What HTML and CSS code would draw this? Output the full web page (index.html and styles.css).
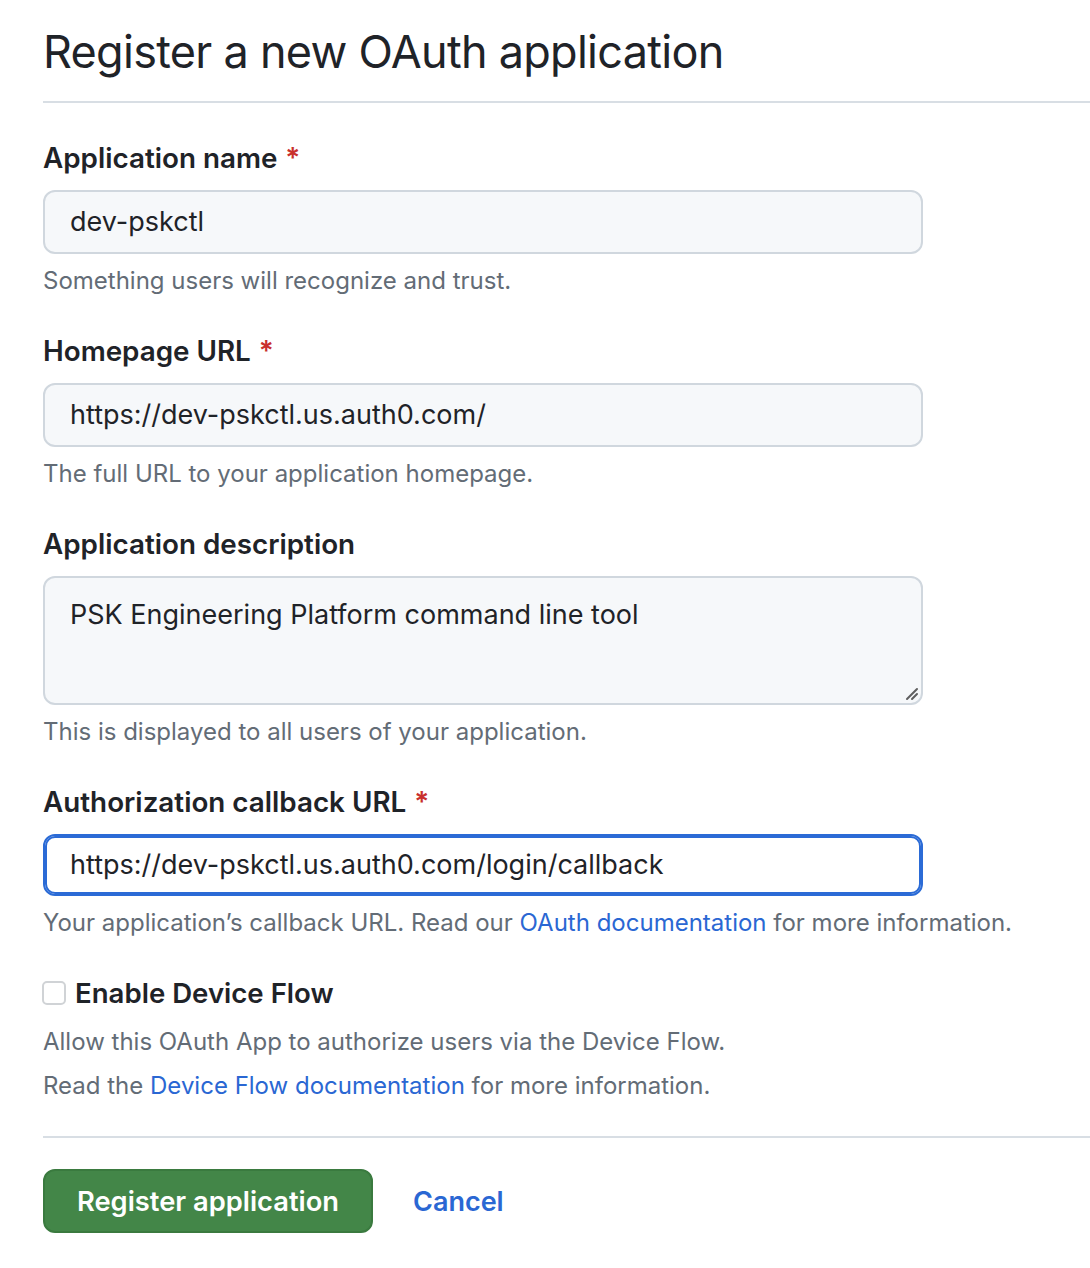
FILE: index.html
```html
<!DOCTYPE html>
<html lang="en">
<head>
<meta charset="utf-8">
<title>Register a new OAuth application</title>
<link rel="stylesheet" href="styles.css">
</head>
<body>
<div class="page">
  <h1 class="title">Register a new OAuth application</h1>
  <form class="form">
    <div class="group">
      <label class="label">Application name <span class="req">*</span></label>
      <div class="control">dev-pskctl</div>
      <p class="note">Something users will recognize and trust.</p>
    </div>
    <div class="group">
      <label class="label">Homepage URL <span class="req">*</span></label>
      <div class="control">https://dev-pskctl.us.auth0.com/</div>
      <p class="note">The full URL to your application homepage.</p>
    </div>
    <div class="group">
      <label class="label">Application description</label>
      <div class="control textarea">PSK Engineering Platform command line tool
        <svg class="grip" width="16" height="16" viewBox="0 0 16 16"><path d="M14 4 L4 14 M14 9 L9 14" stroke="#5f5f5f" stroke-width="2" stroke-linecap="round" fill="none"/></svg>
      </div>
      <p class="note">This is displayed to all users of your application.</p>
    </div>
    <div class="group">
      <label class="label">Authorization callback URL <span class="req">*</span></label>
      <div class="control focused">https://dev-pskctl.us.auth0.com/login/callback</div>
      <p class="note">Your application’s callback URL. Read our <a class="link">OAuth documentation</a> for more information.</p>
    </div>
    <div class="group check-group">
      <div class="check-row">
        <span class="checkbox"></span>
        <span class="check-label">Enable Device Flow</span>
      </div>
      <p class="note note-lg">Allow this OAuth App to authorize users via the Device Flow.</p>
      <p class="note note-lg">Read the <a class="link">Device Flow documentation</a> for more information.</p>
    </div>
    <div class="actions">
      <button type="button" class="btn-primary">Register application</button>
      <a class="cancel">Cancel</a>
    </div>
  </form>
</div>
</body>
</html>
```
FILE: styles.css
```css
html, body {
  margin: 0;
  padding: 0;
  background: #ffffff;
}
body {
  font-family: Inter, "Liberation Sans", sans-serif;
  color: #1f2328;
  overflow: hidden;
}
.page {
  padding-left: 43px;
}
.title {
  margin: 0;
  padding: 22px 0 19px;
  font-size: 45px;
  line-height: 60px;
  font-weight: 400;
  letter-spacing: -0.72px;
  border-bottom: 2px solid #d8dee4;
}
.form {
  padding-top: 35px;
}
.group {
  margin-bottom: 32px;
}
.label {
  display: block;
  font-size: 27.8px;
  line-height: 40px;
  font-weight: 600;
  margin-bottom: 12px;
}
.req {
  color: #c9302c;
  margin-left: 1px;
}
.control {
  position: relative;
  box-sizing: border-box;
  width: 880px;
  height: 64px;
  padding: 0 25px;
  border: 2px solid #d0d7de;
  border-radius: 12px;
  background: #f6f8fa;
  font-size: 27px;
  line-height: 60px;
  color: #1f2328;
}
.textarea {
  height: 129px;
  padding-top: 15px;
  line-height: 44px;
}
.grip {
  position: absolute;
  right: 2px;
  bottom: 2px;
}
.focused {
  background: #ffffff;
  border-color: #2b6bd6;
  box-shadow: inset 0 0 0 2px #2b6bd6;
  height: 62px;
  line-height: 58px;
}
.note {
  margin: 9px 0 0;
  font-size: 24px;
  line-height: 36px;
  color: #636c76;
}
.link {
  color: #2a67d3;
  text-decoration: none;
}
.check-row {
  display: flex;
  align-items: center;
  height: 40px;
}
.checkbox {
  box-sizing: border-box;
  width: 24px;
  height: 24px;
  border: 2px solid #d0d3d6;
  border-radius: 5px;
  background: #fff;
  margin-left: -1px;
  margin-right: 9px;
}
.check-label {
  font-size: 27.6px;
  font-weight: 600;
}
.note-lg {
  margin-top: 11px;
}
.note-lg + .note-lg {
  margin-top: 8px;
}
.actions {
  border-top: 2px solid #d8dee4;
  padding-top: 31px;
  display: flex;
  align-items: center;
  gap: 40px;
}
.btn-primary {
  box-sizing: border-box;
  height: 64px;
  width: 330px;
  border: 2px solid #3a7a3f;
  border-radius: 12px;
  background: #438648;
  color: #ffffff;
  font-family: inherit;
  font-size: 27.3px;
  font-weight: 600;
  padding: 0;
}
.cancel {
  color: #2a67d3;
  font-size: 27px;
  font-weight: 600;
}
```
